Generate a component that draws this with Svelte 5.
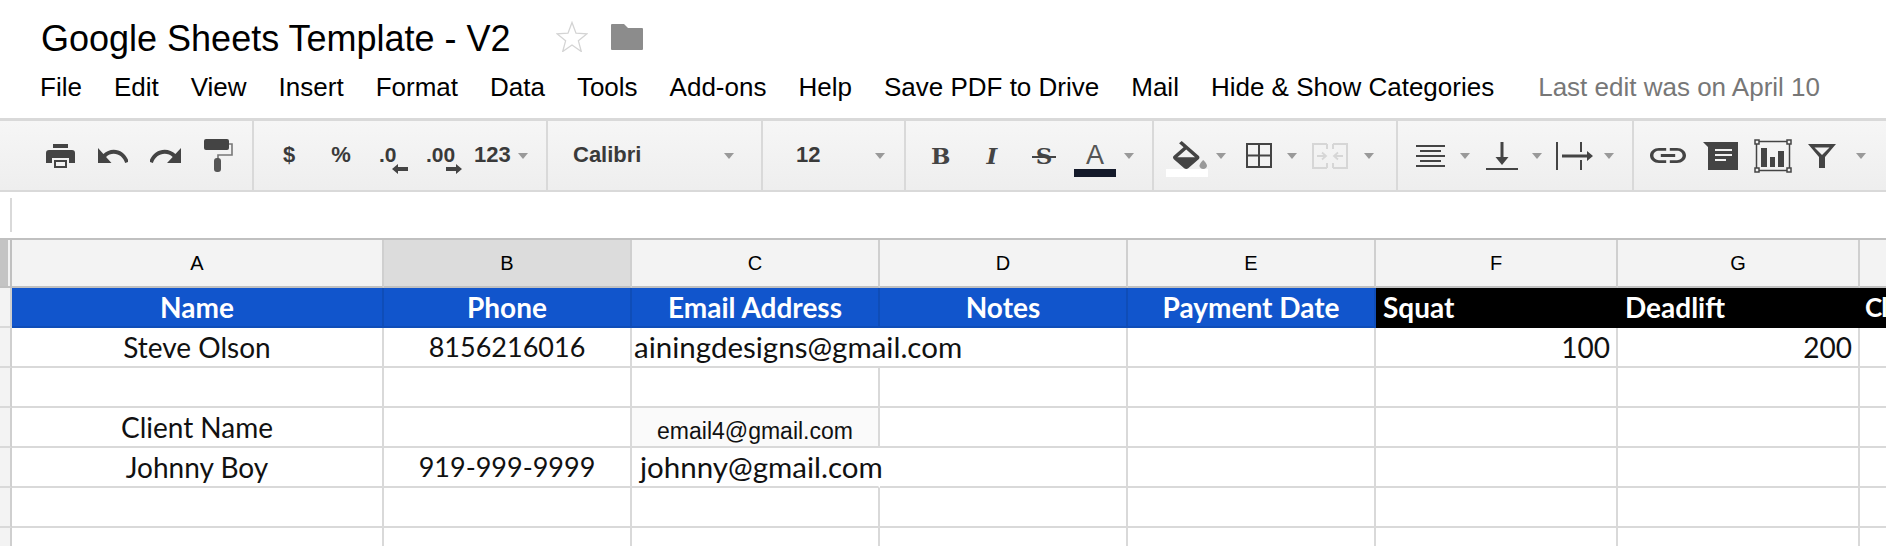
<script>
  const columns = [
    { label: "A", width: 372 },
    { label: "B", width: 248, active: true },
    { label: "C", width: 248 },
    { label: "D", width: 248 },
    { label: "E", width: 248 },
    { label: "F", width: 242 },
    { label: "G", width: 242 },
    { label: "", width: 40 },
  ];
  const menu = ["File", "Edit", "View", "Insert", "Format", "Data", "Tools", "Add-ons", "Help", "Save PDF to Drive", "Mail", "Hide & Show Categories"];
  const template = `12px ${columns.map((c) => c.width + "px").join(" ")}`;
  const blanks = [1, 2, 3, 4, 5, 6, 7, 8];
</script>

<div class="page">
  <header class="docs">
    <div class="title-row">
      <h1>Google Sheets Template - V2</h1>
      <svg class="star" viewBox="0 0 32 31" width="32" height="31">
        <path d="M16 1.5l4 10.7 11 .6-8.600 7 2.900 10.700L16 24l-9.300 6.500 2.900-10.700-8.600-7 11-.6z" fill="#fff" stroke="#d4d4d4" stroke-width="1.300" />
      </svg>
      <svg class="folder" viewBox="0 0 32 26" width="32" height="26">
        <path d="M1 0h12l4 4h14a1 1 0 0 1 1 1v20a1 1 0 0 1-1 1H1a1 1 0 0 1-1-1V1a1 1 0 0 1 1-1z" fill="#8c8c8c" />
      </svg>
    </div>
    <nav class="menu">
      {#each menu as item}
        <span>{item}</span>
      {/each}
      <span class="last-edit">Last edit was on April 10</span>
    </nav>
  </header>

  <div class="toolbar">
    <div class="group g1">
      <svg class="print" viewBox="0 0 29 24" width="29" height="24" fill="#444">
        <path d="M7 0h15v4H7z" />
        <path d="M3 6h23a3 3 0 0 1 3 3v10h-6v-5H6v5H0V9a3 3 0 0 1 3-3z" />
        <path d="M8 16h13v8H8z" />
        <path d="M10 18h9v4h-9z" fill="#f2f2f2" />
      </svg>
      <svg class="undo" viewBox="2 7 20 9" width="30" height="15" preserveAspectRatio="none" fill="#444">
        <path d="M12.500 8c-2.650 0-5.050.99-6.900 2.600L2 7v9h9l-3.620-3.620c1.390-1.160 3.160-1.880 5.120-1.880 3.540 0 6.550 2.310 7.600 5.500l2.370-.78C21.080 11.030 17.150 8 12.500 8z" />
      </svg>
      <svg class="redo" viewBox="2 7 20 9" width="31" height="15" preserveAspectRatio="none" fill="#444">
        <path d="M18.400 10.600C16.550 8.990 14.150 8 11.500 8c-4.650 0-8.580 3.030-9.960 7.220L3.900 16c1.050-3.190 4.050-5.500 7.600-5.500 1.950 0 3.730.72 5.120 1.880L13 16h9V7l-3.600 3.600z" />
      </svg>
      <svg class="roller" viewBox="0 0 29 33" width="29" height="33">
        <rect x="0" y="0" width="25" height="11" rx="2" fill="#444" />
        <path d="M25 5h3v11H14v4" fill="none" stroke="#777" stroke-width="1.600" />
        <rect x="10" y="19" width="7" height="14" rx="3" fill="#555" />
      </svg>
    </div>

    <div class="group g2">
      <span class="label dollar">$</span>
      <span class="label percent">%</span>
      <span class="label dec dec-less">.0
        <svg viewBox="0 0 16 10" width="16" height="10" fill="#444"><path d="M0 5l6-5v3h10v4H6v3z" /></svg>
      </span>
      <span class="label dec dec-more">.00
        <svg viewBox="0 0 16 10" width="16" height="10" fill="#444"><path d="M16 5l-6-5v3H0v4h10v3z" /></svg>
      </span>
      <span class="label num">123</span>
      <i class="caret c8"></i>
    </div>

    <div class="group g3">
      <span class="label font">Calibri</span>
      <i class="caret font-caret"></i>
    </div>

    <div class="group g4">
      <span class="label size">12</span>
      <i class="caret size-caret"></i>
    </div>

    <div class="group g5">
      <span class="glyph bold">B</span>
      <span class="glyph italic">I</span>
      <span class="glyph strike">S</span>
      <span class="swatch text-color"><span class="glyph letter">A</span><b class="bar"></b></span>
      <i class="caret c8"></i>
    </div>

    <div class="group g6">
      <span class="swatch fill-color">
        <svg viewBox="3 0 18 17" width="34" height="28" preserveAspectRatio="none">
          <path d="M16.560 8.940L7.620 0 6.210 1.410l2.380 2.380-5.150 5.150c-.59.59-.59 1.540 0 2.120l5.500 5.500c.29.29.68.44 1.060.44s.77-.15 1.060-.44l5.500-5.500c.59-.58.59-1.530 0-2.120zM5.210 10L10 5.210 14.790 10H5.210z" fill="#444" />
          <path d="M5 10h10l-5 5z" fill="#444" />
          <path d="M19 11.500s-2 2.170-2 3.500c0 1.100.9 2 2 2s2-.9 2-2c0-1.330-2-3.500-2-3.500z" fill="#999" />
        </svg>
        <b class="bar white"></b>
      </span>
      <i class="caret c8"></i>
      <svg class="borders" viewBox="0 0 26 25" width="26" height="25" fill="none" stroke="#444" stroke-width="2">
        <path d="M1 1h24v23H1zM13 1v23M1 12.500h24" />
      </svg>
      <i class="caret c15"></i>
      <svg class="merge" viewBox="0 0 36 26" width="36" height="26" fill="none" stroke="#d6d6d6" stroke-width="2">
        <path d="M15 1H1v24h14M15 1v5M15 20v5M21 1h14v24H21M21 1v5M21 20v5" />
        <path d="M5 13h8M10 9.500l4 3.500-4 3.500M31 13h-8M26 9.500L22 13l4 3.500" stroke-width="1.800" />
      </svg>
      <i class="caret c16"></i>
    </div>

    <div class="group g7">
      <svg class="align" viewBox="0 0 29 22" width="29" height="22" fill="#444">
        <path d="M0 0h29v2H0zM4 5h21v2H4zM0 10h29v2H0zM4 15h21v2H4zM0 20h29v2H0z" />
      </svg>
      <i class="caret c15"></i>
      <svg class="valign" viewBox="0 0 32 28" width="32" height="28" fill="#444">
        <path d="M14.500 0h3v15h5L16 23l-6.500-8h5zM0 26h32v2H0z" />
      </svg>
      <i class="caret c14"></i>
      <svg class="wrap" viewBox="0 0 37 28" width="37" height="28" fill="#444">
        <path d="M0 0h2v28H0zM24 0h2v10h-2zM24 18h2v10h-2zM6 12.500h25V9l6 5-6 5v-3.500H6z" />
      </svg>
      <i class="caret c11"></i>
    </div>

    <div class="group g8">
      <svg class="link" viewBox="2 7 20 10" width="36" height="15" preserveAspectRatio="none" fill="#444">
        <path d="M3.900 12c0-1.710 1.390-3.100 3.100-3.100h4V7H7c-2.760 0-5 2.240-5 5s2.240 5 5 5h4v-1.900H7c-1.710 0-3.100-1.390-3.100-3.100zM8 13h8v-2H8v2zm9-6h-4v1.900h4c1.710 0 3.100 1.390 3.100 3.100s-1.390 3.100-3.100 3.100h-4V17h4c2.760 0 5-2.240 5-5s-2.240-5-5-5z" />
      </svg>
      <svg class="comment" viewBox="0 0 35 28" width="35" height="28">
        <path d="M0 0h35v28H5V5z" fill="#444" />
        <path d="M12 7h17v2H12zM12 12h17v2H12zM12 17h11v2H12z" fill="#f2f2f2" />
      </svg>
      <svg class="chart" viewBox="0 0 38 34" width="38" height="34">
        <rect x="2.500" y="2.500" width="33" height="29" fill="none" stroke="#444" stroke-width="1.500" />
        <path d="M7 9h6v19H7zM16 18h5v10h-5zM24 12h6v16h-6z" fill="#444" />
        <g fill="#f2f2f2" stroke="#444" stroke-width="1.500">
          <rect x="1" y="1" width="4" height="4" />
          <rect x="33" y="1" width="4" height="4" />
          <rect x="1" y="29" width="4" height="4" />
          <rect x="33" y="29" width="4" height="4" />
        </g>
      </svg>
      <svg class="filter" viewBox="0 0 28 24" width="28" height="24">
        <path d="M0 0h28L17 13v11h-6V13z" fill="#444" />
        <path d="M6.500 3.500h15L14 11z" fill="#f2f2f2" />
      </svg>
      <i class="caret filter-caret"></i>
    </div>
  </div>

  <div class="formula"><span class="fx-line"></span></div>

  <div class="grid" style="grid-template-columns: {template}">
    <div class="corner"><span class="freeze"></span></div>
    {#each columns as col}
      <div class="col" class:active={col.active}>{col.label}</div>
    {/each}

    <div class="gutter"></div>
    <div class="cell blue">Name</div>
    <div class="cell blue">Phone</div>
    <div class="cell blue">Email Address</div>
    <div class="cell blue">Notes</div>
    <div class="cell blue">Payment Date</div>
    <div class="cell black">Squat</div>
    <div class="cell black">Deadlift</div>
    <div class="cell black next">Cl</div>

    <div class="gutter"></div>
    <div class="cell center">Steve Olson</div>
    <div class="cell center digits">8156216016</div>
    <div class="cell wide mail">ainingdesigns@gmail.com</div>
    <div class="cell"></div>
    <div class="cell right">100</div>
    <div class="cell right">200</div>
    <div class="cell"></div>

    <div class="gutter"></div>
    {#each blanks as b (b)}<div class="cell"></div>{/each}

    <div class="gutter"></div>
    <div class="cell center">Client Name</div>
    <div class="cell"></div>
    <div class="cell arial">email4@gmail.com</div>
    <div class="cell"></div>
    <div class="cell"></div>
    <div class="cell"></div>
    <div class="cell"></div>
    <div class="cell"></div>

    <div class="gutter"></div>
    <div class="cell center">Johnny Boy</div>
    <div class="cell center digits">919-999-9999</div>
    <div class="cell mail johnny">johnny@gmail.com</div>
    <div class="cell"></div>
    <div class="cell"></div>
    <div class="cell"></div>
    <div class="cell"></div>
    <div class="cell"></div>

    <div class="gutter"></div>
    {#each blanks as b (b)}<div class="cell"></div>{/each}

    <div class="gutter"></div>
    {#each blanks as b (b)}<div class="cell"></div>{/each}
  </div>
</div>

<style>
  :global(body) {
    background: #fff;
    overflow: hidden;
  }

  .page {
    width: 1886px;
    height: 546px;
    overflow: hidden;
    font-family: "Liberation Sans", Arial, sans-serif;
    color: #000;
  }

  .docs {
    height: 118px;
    padding-left: 41px;
    box-sizing: border-box;
  }

  .title-row {
    display: flex;
    align-items: flex-start;
    height: 66px;
    padding-top: 19px;
    box-sizing: border-box;
  }

  h1 {
    margin: 0;
    font-size: 36px;
    font-weight: 400;
    line-height: 39px;
    width: 515px;
  }

  .star {
    margin-top: 2px;
  }

  .folder {
    margin: 5px 0 0 23px;
  }

  .menu {
    display: flex;
    gap: 32px;
    margin-left: -1px;
    font-size: 26px;
    line-height: 42px;
  }

  .last-edit {
    margin-left: 12px;
    color: #777;
  }

  .toolbar {
    display: flex;
    height: 74px;
    box-sizing: border-box;
    border-top: 3px solid #d9d9d9;
    border-bottom: 2px solid #d9d9d9;
    background: linear-gradient(#f6f6f6, #eeeeee);
  }

  .group {
    display: flex;
    align-items: center;
    flex: none;
    height: 100%;
    box-sizing: border-box;
    border-right: 2px solid #d9d9d9;
  }

  .group > * {
    flex: none;
  }

  .g1 { width: 254px; }
  .g2 { width: 294px; }
  .g3 { width: 215px; }
  .g4 { width: 143px; }
  .g5 { width: 248px; }
  .g6 { width: 244px; }
  .g7 { width: 236px; }
  .g8 { width: 252px; border-right: 0; }

  .print { margin-left: 46px; }
  .undo { margin-left: 23px; }
  .redo { margin-left: 22px; }
  .roller { margin-left: 23px; }

  .label {
    font-size: 22px;
    font-weight: 700;
    color: #3a3a3a;
    text-align: center;
    margin-bottom: 2px;
  }

  .dollar { margin-left: 25px; width: 20px; }
  .percent { margin-left: 27px; width: 30px; }
  .dec {
    position: relative;
    text-align: left;
    font-size: 21px;
  }
  .dec svg {
    position: absolute;
    right: 0;
    top: 21px;
  }
  .dec-less { margin-left: 23px; width: 29px; }
  .dec-more { margin-left: 18px; width: 36px; }
  .num { margin-left: 12px; width: 36px; }

  .font { margin-left: 25px; width: 67px; text-align: left; }
  .font-caret { margin-left: 84px; }
  .size { margin-left: 33px; width: 23px; }
  .size-caret { margin-left: 56px; }

  .caret {
    display: block;
    width: 0;
    height: 0;
    border-left: 5px solid transparent;
    border-right: 5px solid transparent;
    border-top: 6px solid #999;
  }

  .c8 { margin-left: 8px; }
  .c11 { margin-left: 11px; }
  .c14 { margin-left: 14px; }
  .c15 { margin-left: 15px; }
  .c16 { margin-left: 16px; }
  .filter-caret { margin-left: 20px; }

  .glyph {
    color: #444;
    text-align: center;
    line-height: 26px;
  }

  .bold {
    margin-left: 25px;
    width: 18px;
    font: 700 23px "DejaVu Serif", serif;
  }

  .italic {
    margin-left: 33px;
    width: 20px;
    font: italic 700 23px "DejaVu Serif", serif;
  }

  .strike {
    position: relative;
    margin-left: 30px;
    width: 24px;
    font: 700 23px "DejaVu Serif", serif;
  }

  .strike::after {
    content: "";
    position: absolute;
    left: 0;
    right: 0;
    top: 50%;
    height: 2px;
    background: #444;
  }

  .swatch {
    display: flex;
    flex-direction: column;
    align-items: center;
    width: 42px;
    height: 36px;
    justify-content: flex-end;
    margin-top: 7px;
  }

  .text-color { margin-left: 18px; }
  .fill-color { margin-left: 12px; }

  .letter {
    font: 400 27px/28px "Liberation Sans", sans-serif;
    color: #555;
  }

  .fill-color svg {
    flex: none;
    margin-left: 6px;
  }

  .bar {
    flex: none;
    width: 42px;
    height: 8px;
    background: #141a2a;
  }

  .bar.white {
    background: #fff;
  }

  .borders { margin-left: 20px; }
  .merge { margin-left: 15px; }
  .align { margin-left: 18px; }
  .valign { margin-left: 16px; }
  .wrap { margin-left: 14px; }
  .link { margin-left: 16px; }
  .comment { margin-left: 17px; }
  .chart { margin-left: 16px; }
  .filter { margin-left: 16px; }

  .formula {
    display: flex;
    align-items: center;
    height: 46px;
    padding-left: 10px;
    box-sizing: border-box;
  }

  .fx-line {
    width: 2px;
    height: 34px;
    background: #d9d9d9;
  }

  .grid {
    display: grid;
    grid-template-rows: 48px repeat(7, 40px);
    border-top: 2px solid #c0c0c0;
    font-family: Lato, "Open Sans", sans-serif;
    font-size: 28px;
    color: #111;
    white-space: nowrap;
  }

  .corner {
    background: #f3f3f3;
    border-right: 2px solid #c0c0c0;
    border-bottom: 2px solid #c0c0c0;
    box-sizing: border-box;
    padding-right: 2px;
  }

  .freeze {
    display: block;
    height: 100%;
    width: 8px;
    background: #c4c4c4;
  }

  .col {
    display: flex;
    align-items: center;
    justify-content: center;
    box-sizing: border-box;
    background: #f3f3f3;
    border-right: 2px solid #cfcfcf;
    border-bottom: 2px solid #c0c0c0;
    font-family: "Liberation Sans", sans-serif;
    font-size: 20px;
    color: #000;
  }

  .col.active {
    background: #dcdcdc;
  }

  .gutter {
    background: #f3f3f3;
    box-sizing: border-box;
    border-right: 2px solid #cfcfcf;
    border-bottom: 2px solid #d9d9d9;
  }

  .cell {
    box-sizing: border-box;
    border-right: 2px solid #d9d9d9;
    border-bottom: 2px solid #d9d9d9;
    line-height: 38px;
    min-width: 0;
  }

  .center {
    text-align: center;
  }

  .digits {
    font-size: 27px;
  }

  .right {
    text-align: right;
    padding-right: 6px;
  }

  .blue {
    background: #1155cc;
    color: #fff;
    font-weight: 700;
    text-align: center;
    border-color: #0f4db8;
  }

  .black {
    background: #000;
    color: #fff;
    font-weight: 700;
    border-color: #000;
    padding-left: 7px;
  }

  .next {
    padding-left: 5px;
    font-size: 26px;
    letter-spacing: -1px;
  }

  .wide {
    grid-column: span 2;
  }

  .mail {
    font-size: 29.500px;
    padding-left: 2px;
  }

  .johnny {
    padding-left: 8px;
    border-right-color: transparent;
  }

  .arial {
    background: #fafafa;
    font-family: "Liberation Sans", sans-serif;
    font-size: 23px;
    text-align: center;
    line-height: 46px;
  }
</style>
